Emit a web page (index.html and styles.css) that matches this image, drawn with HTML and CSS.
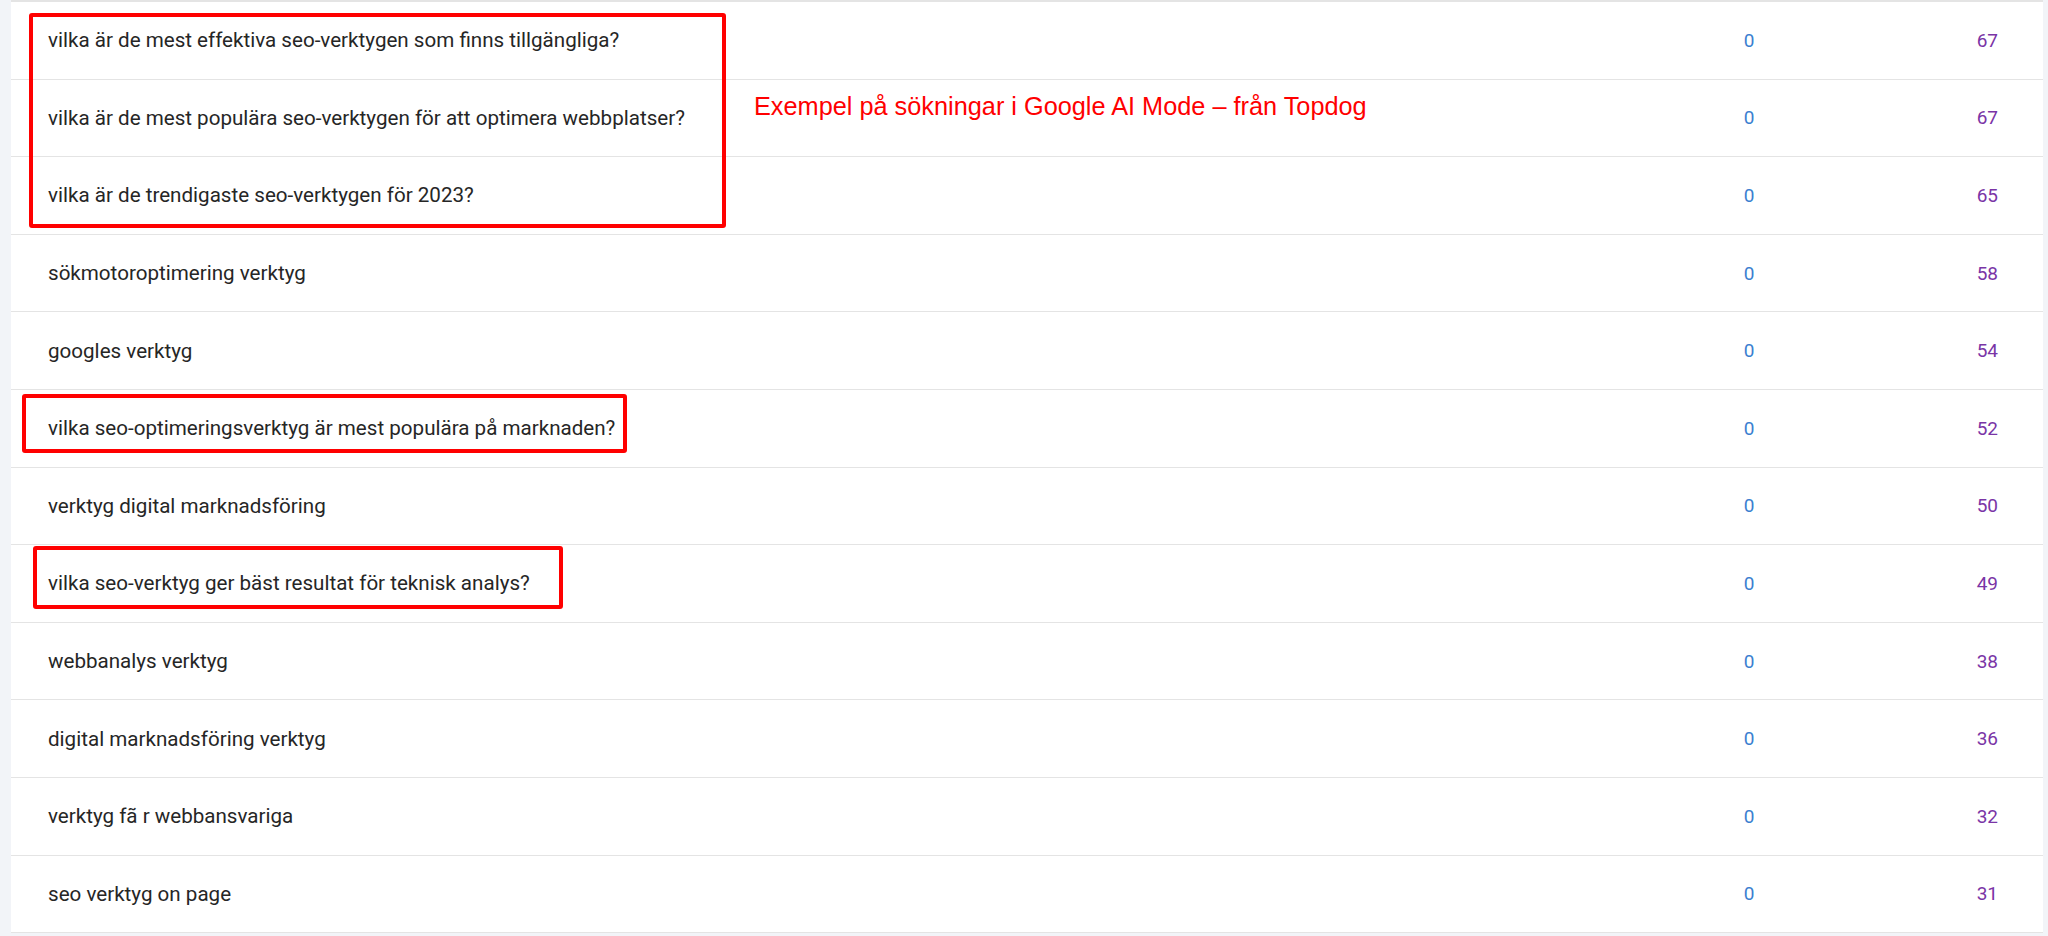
FILE: index.html
```html
<!DOCTYPE html>
<html lang="sv">
<head>
<meta charset="utf-8">
<title>Sökord</title>
<link rel="stylesheet" href="styles.css">
</head>
<body>
<div class="page">
  <div class="table">
    <div class="row"><div class="kw">vilka är de mest effektiva seo-verktygen som finns tillgängliga?</div><div class="c2">0</div><div class="c3">67</div></div>
    <div class="row"><div class="kw">vilka är de mest populära seo-verktygen för att optimera webbplatser?</div><div class="c2">0</div><div class="c3">67</div></div>
    <div class="row"><div class="kw">vilka är de trendigaste seo-verktygen för 2023?</div><div class="c2">0</div><div class="c3">65</div></div>
    <div class="row"><div class="kw">sökmotoroptimering verktyg</div><div class="c2">0</div><div class="c3">58</div></div>
    <div class="row"><div class="kw">googles verktyg</div><div class="c2">0</div><div class="c3">54</div></div>
    <div class="row"><div class="kw">vilka seo-optimeringsverktyg är mest populära på marknaden?</div><div class="c2">0</div><div class="c3">52</div></div>
    <div class="row"><div class="kw">verktyg digital marknadsföring</div><div class="c2">0</div><div class="c3">50</div></div>
    <div class="row"><div class="kw">vilka seo-verktyg ger bäst resultat för teknisk analys?</div><div class="c2">0</div><div class="c3">49</div></div>
    <div class="row"><div class="kw">webbanalys verktyg</div><div class="c2">0</div><div class="c3">38</div></div>
    <div class="row"><div class="kw">digital marknadsföring verktyg</div><div class="c2">0</div><div class="c3">36</div></div>
    <div class="row"><div class="kw">verktyg fã r webbansvariga</div><div class="c2">0</div><div class="c3">32</div></div>
    <div class="row"><div class="kw">seo verktyg on page</div><div class="c2">0</div><div class="c3">31</div></div>
  </div>
  <div class="mark mark-1"></div>
  <div class="mark mark-2"></div>
  <div class="mark mark-3"></div>
  <div class="note">Exempel på sökningar i Google AI Mode – från Topdog</div>
</div>
</body>
</html>
```

FILE: styles.css
```css
html, body {
  margin: 0;
  padding: 0;
}
body {
  background: #f2f4f8;
  font-family: Roboto, "Noto Sans", sans-serif;
  overflow: hidden;
}
.page {
  position: relative;
  width: 2048px;
  height: 936px;
}
.table {
  margin-left: 11px;
  width: 2032px;
  background: #ffffff;
  border-top: 2px solid #e4e4e4;
}
.row {
  display: flex;
  align-items: center;
  height: 76.6px;
  border-bottom: 1px solid #e4e4e4;
  font-size: 19px;
}
.kw {
  flex: 1;
  padding-left: 37px;
  color: #262626;
  font-size: 20.6px;
}
.c2 {
  width: 160px;
  text-align: center;
  color: #3b7fd0;
}
.c3 {
  width: 169px;
  padding-right: 45px;
  text-align: right;
  color: #7a35a6;
}
.mark {
  position: absolute;
  border: 4px solid #ff0000;
  border-radius: 3px;
  box-sizing: border-box;
}
.mark-1 { left: 29px; top: 13px; width: 697px; height: 215px; }
.mark-2 { left: 22px; top: 394px; width: 605px; height: 59px; }
.mark-3 { left: 33px; top: 546px; width: 530px; height: 63px; }
.note {
  position: absolute;
  left: 754px;
  top: 92px;
  font-family: "Liberation Sans", Arial, sans-serif;
  font-size: 25.3px;
  color: #ff0000;
  white-space: nowrap;
}
```
